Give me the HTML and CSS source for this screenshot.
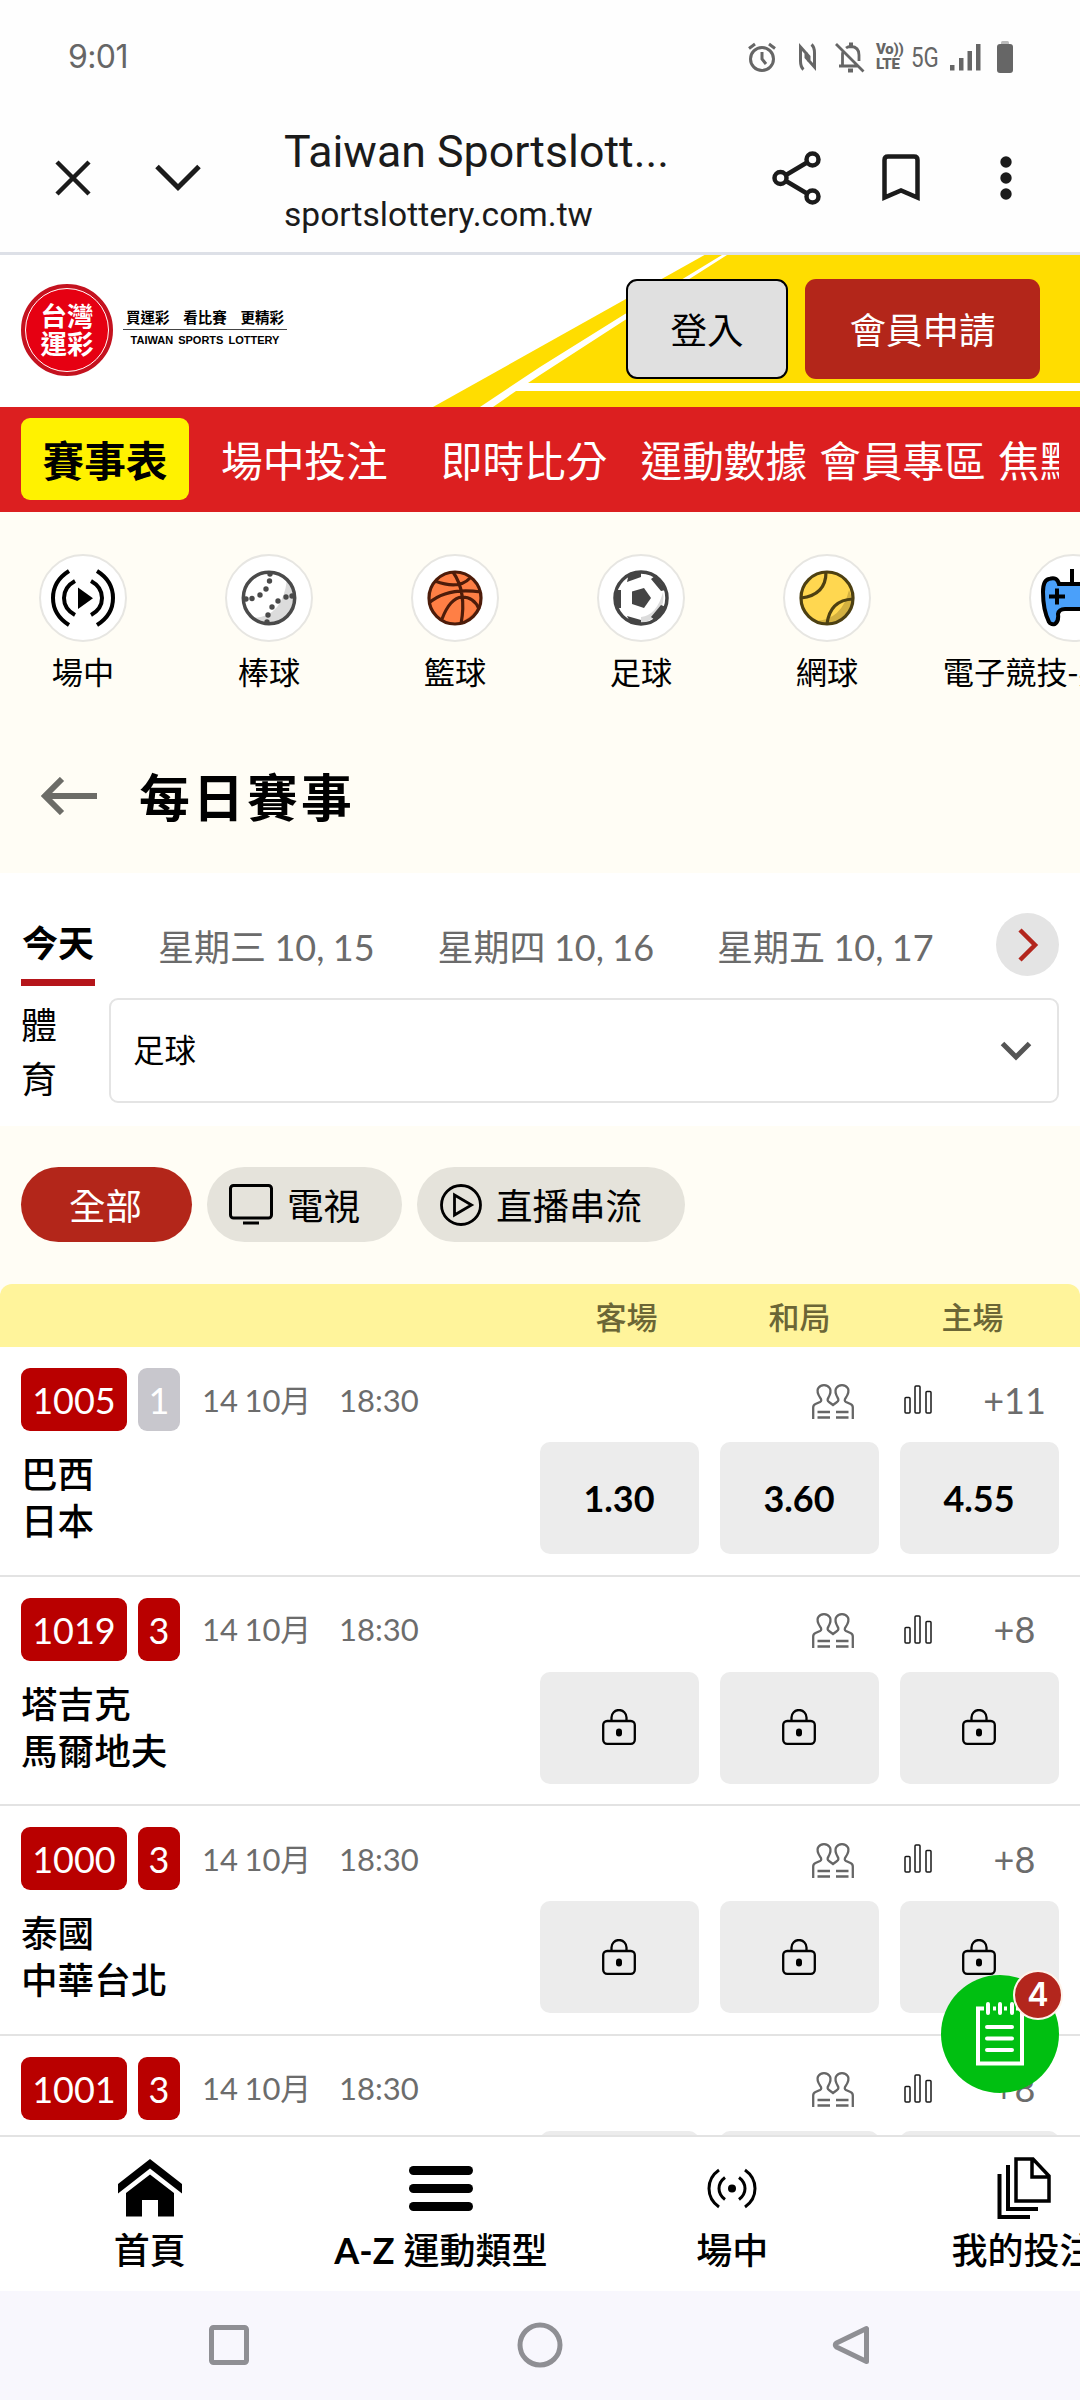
FILE: index.html
```html
<!DOCTYPE html>
<html lang="zh-Hant">
<head>
<meta charset="utf-8">
<title>Taiwan Sportslottery</title>
<link rel="stylesheet" href="styles.css">
</head>
<body>
<svg class="defs" width="0" height="0">
  <symbol id="people" viewBox="0 0 42 35"><g fill="none" stroke="#666" stroke-width="2.300"><path d="M1.200 35V23.500Q1.200 21 3.500 20L8 18Q10.500 16.500 8 13.500Q4.500 8 6 4.500Q8 1.200 12 1.200Q16 1.200 18 4.500Q19.500 8 16.500 13.500Q14.500 16.500 17 18L21 21L25 18Q27.500 16.500 25.500 13.500Q22.500 8 24 4.500Q26 1.200 30 1.200Q34 1.200 36 4.500Q37.500 8 34 13.500Q31.500 16.500 34 18L38.500 20Q40.800 21 40.800 23.500V35"/><path d="M5.500 28H18M24 28H36.500M5.500 33.500H18M24 33.500H36.500"/></g></symbol>
  <symbol id="bars" viewBox="0 0 28 29"><g fill="#fff" stroke="#1a1a1a" stroke-width="1.500"><rect x="1" y="12.500" width="5" height="15.500" rx="1"/><rect x="11" y="1" width="5" height="27" rx="1"/><rect x="22" y="6.500" width="5" height="21.500" rx="1"/></g></symbol>
  <symbol id="lock" viewBox="0 0 34 36"><g fill="none" stroke="#000" stroke-width="2.300"><rect x="1.200" y="12" width="31.600" height="22.800" rx="4"/><path d="M9.500 12V8.500A7.500 7.500 0 0 1 24.500 8.500V12"/></g><rect x="14" y="19.500" width="6" height="8" rx="3"/></symbol>
</svg>

<div class="status">
  <span class="clock">9:01</span>
  <div class="status-icons">
    <svg class="i-alarm" width="28" height="30" viewBox="0 0 28 30" fill="none" stroke="#666" stroke-width="3"><circle cx="14" cy="17" r="11.500"/><path d="M14 10v7l4 5M1 6.500L7 2M27 6.500L21 2"/></svg>
    <svg class="i-nfc" width="17" height="28" viewBox="0 0 17 28" fill="none" stroke="#666" stroke-width="3"><path d="M4.500 26.500Q1.500 24 1.500 18V4L10 13.500V19M12.500 1.500Q15.500 4 15.500 10V24L7 14.500V9"/></svg>
    <svg class="i-bell" width="30" height="31" viewBox="0 0 30 31" fill="none" stroke="#666" stroke-width="2.800"><path d="M1 2L28.500 29.500M4 24H23.500M7.500 24V12Q7.500 10 8.500 9M11 6Q13 4.500 16 4.500Q24 5 24 13V19"/><path d="M14 2.500h4M13 28.500h5" stroke-width="4"/></svg>
    <span class="volte"><b>Vo))</b><b>LTE</b></span>
    <span class="net">5G</span>
    <svg class="i-signal" width="31" height="28" viewBox="0 0 31 28" fill="#666"><path d="M0 22h4.500v5.500H0zM9 15h4.500v12.500H9zM17.500 8h4.500v19.500h-4.500zM26 1h4.500v26.500H26z"/></svg>
    <svg class="i-battery" width="16" height="32" viewBox="0 0 16 32"><path d="M4 3V1.500Q4 0 5.500 0h5Q12 0 12 1.500V3z" fill="#bbb"/><rect y="3" width="16" height="29" rx="3" fill="#666"/></svg>
  </div>
</div>

<div class="browser">
  <svg class="b-close" width="36" height="36" viewBox="0 0 36 36" stroke="#1b1b1b" stroke-width="4.500"><path d="M2 2L34 34M34 2L2 34"/></svg>
  <svg class="b-down" width="46" height="28" viewBox="0 0 46 28" fill="none" stroke="#1b1b1b" stroke-width="5"><path d="M2 2.500L23 23.500L44 2.500"/></svg>
  <div class="b-text"><div class="b-title">Taiwan Sportslott...</div><div class="b-url">sportslottery.com.tw</div></div>
  <svg class="b-share" width="50" height="54" viewBox="0 0 50 54" fill="none" stroke="#1b1b1b" stroke-width="4.500"><path d="M14 24L35 11.500M14 30L35 42.500"/><circle cx="8.500" cy="27" r="6"/><circle cx="40.500" cy="8.500" r="6"/><circle cx="40.500" cy="45.500" r="6"/></svg>
  <svg class="b-mark" width="38" height="48" viewBox="0 0 38 48" fill="none" stroke="#1b1b1b" stroke-width="4.500"><path d="M2.500 43.500V6Q2.500 2.500 6 2.500H32Q35.500 2.500 35.500 6V43.500L19 36.500Z"/></svg>
  <svg class="b-more" width="12" height="44" viewBox="0 0 12 44" fill="#1b1b1b"><circle cx="6" cy="6" r="5.700"/><circle cx="6" cy="22" r="5.700"/><circle cx="6" cy="38" r="5.700"/></svg>
</div>

<header class="site">
  <svg class="site-bg" width="1080" height="152" viewBox="0 0 1080 152"><path d="M433 152L704.500 0H1080V152Z" fill="#ffdd00"/><path d="M480 152L540 112L625 59L722 0H727L625 65L540 120L528 128H1080V136H516L493 152Z" fill="#fff"/></svg>
  <div class="site-row">
    <div class="logo"><span class="logo-ring"></span><span>台灣</span><span>運彩</span></div>
    <div class="slogan"><div class="slogan-zh"><span>買運彩</span><span>看比賽</span><span>更精彩</span></div><div class="slogan-en">TAIWAN SPORTS LOTTERY</div></div>
    <button class="btn login">登入</button>
    <button class="btn join">會員申請</button>
  </div>
</header>

<nav class="menu"><div class="menu-clip">
  <a class="active">賽事表</a><a class="m2">場中投注</a><a class="m3">即時比分</a><a class="m4">運動數據</a><a class="m5">會員專區</a><a class="m6">焦點</a>
</div></nav>

<div class="sports">
  <div class="sport"><div class="disc"><svg width="64" height="58" viewBox="0 0 64 58" fill="none" stroke="#000" stroke-width="4"><path d="M18 2Q2 12 2 29Q2 46 18 56M46 2Q62 12 62 29Q62 46 46 56M24 12Q13 18 13 29Q13 40 24 46M40 12Q51 18 51 29Q51 40 40 46"/><path d="M27 18.500V40L42 29.200Z" fill="#000" stroke="none"/></svg></div>場中</div>
  <div class="sport"><div class="disc"><svg width="56" height="56" viewBox="0 0 56 56"><circle cx="28" cy="28" r="26" fill="#fff"/><path d="M46 9A26 26 0 0 1 12 48Q42 47 46 9Z" fill="#dcdcdc"/><circle cx="28" cy="28" r="25.700" fill="none" stroke="#4a4a4a" stroke-width="3.500"/><g fill="#4a4a4a"><circle cx="5" cy="29" r="2.700"/><circle cx="11" cy="28.500" r="2.700"/><circle cx="19" cy="25" r="2.700"/><circle cx="25" cy="19" r="2.700"/><circle cx="28.500" cy="11" r="2.700"/><circle cx="29" cy="4" r="2.700"/><circle cx="51" cy="26" r="2.700"/><circle cx="45" cy="27" r="2.700"/><circle cx="37" cy="31" r="2.700"/><circle cx="31" cy="37" r="2.700"/><circle cx="27" cy="45" r="2.700"/><circle cx="26" cy="52" r="2.700"/></g></svg></div>棒球</div>
  <div class="sport"><div class="disc"><svg width="56" height="56" viewBox="0 0 56 56"><circle cx="28" cy="28" r="26" fill="#ff7f45"/><path d="M53 33A26 26 0 0 1 28 53Q45 50 53 33Z" fill="#dd6836"/><g fill="none" stroke="#4d1c0a" stroke-width="3.200"><circle cx="28" cy="28" r="26"/><path d="M26 2Q40 22 34 54M2 33Q20 17 54 22M8 11Q32 20 43 8M15 49Q23 28 35 27Q47 27 52 39"/></g></svg></div>籃球</div>
  <div class="sport"><div class="disc"><svg width="56" height="56" viewBox="0 0 56 56"><circle cx="28" cy="28" r="26" fill="#fff"/><path d="M50 22A26 26 0 0 1 28 53V47Q44 45 50 22Z" fill="#dcdcdc"/><circle cx="28" cy="28" r="26" fill="none" stroke="#444" stroke-width="3.500"/><path d="M19 21.500L31 18L38 28L31 38L19 34Z" fill="#444"/><path d="M14 12L28 7V2L16 3ZM2 20H8V38H2ZM14 46L28 50V54H18ZM38 9L48 21L53 20L42 6ZM38 47L48 35L53 37L43 51Z" fill="#444"/></svg></div>足球</div>
  <div class="sport"><div class="disc"><svg width="56" height="56" viewBox="0 0 56 56"><circle cx="28" cy="28" r="26" fill="#ffd750"/><path d="M50 20L53 28A26 26 0 0 1 16 51Q43 50 50 20Z" fill="#d3b040"/><g fill="none" stroke="#4d4012" stroke-width="3.200"><circle cx="28" cy="28" r="26"/><path d="M27 2Q27 25 2 28M54 29Q31 30 28 54"/></g></svg></div>網球</div>
  <div class="sport wide"><div class="disc"><svg width="64" height="58" viewBox="0 0 64 58"><g stroke="#000" stroke-width="4"><path d="M31 0V14" fill="none"/><path d="M18 15Q16 7 8 10Q2 11 2 23Q2 41 8 53Q10 56 14 55Q18 52 17 45Q18 40 24 40H40Q46 40 47 45Q46 52 50 55Q54 56 56 53Q62 41 62 23Q62 11 56 10Q48 7 46 15Z" fill="#4aa0fa"/><path d="M8 27.500H24M16 19.500V35.500" fill="none"/></g></svg></div>電子競技-英雄聯盟</div>
</div>

<div class="heading"><svg width="56" height="38" viewBox="0 0 56 38" fill="none" stroke="#6c6c67" stroke-width="6"><path d="M56 19H4M21 2L4 19L21 36"/></svg><h1>每日賽事</h1></div>

<section class="filter">
  <div class="days">
    <span class="day today">今天</span><span class="day">星期三 10, 15</span><span class="day">星期四 10, 16</span><span class="day">星期五 10, 17</span>
    <span class="next"><svg width="22" height="34" viewBox="0 0 22 34" fill="none" stroke="#b3261d" stroke-width="4.500"><path d="M3 2L18 17L3 32"/></svg></span>
  </div>
  <div class="pick"><label>體育</label><div class="select">足球<svg width="32" height="20" viewBox="0 0 32 20" fill="none" stroke="#555" stroke-width="5"><path d="M2.500 2.500L16 16L29.500 2.500"/></svg></div></div>
</section>

<div class="pills">
  <span class="pill on">全部</span>
  <span class="pill tv"><svg width="44" height="41" viewBox="0 0 44 41" fill="none" stroke="#000" stroke-width="3"><rect x="1.500" y="1.500" width="41" height="32.500" rx="3"/><path d="M14 39H30"/></svg>電視</span>
  <span class="pill live"><svg width="42" height="42" viewBox="0 0 42 42" fill="none" stroke="#000" stroke-width="2.800"><circle cx="21" cy="21" r="19.500"/><path d="M14.500 11V31L31.500 21Z"/></svg>直播串流</span>
</div>

<div class="cols"><span>客場</span><span>和局</span><span>主場</span></div>

<main class="matches">
  <article class="match">
    <div class="meta"><span class="no">1005</span><span class="min grey">1</span><span class="date">14 10月</span><span class="time">18:30</span><svg class="people"><use href="#people"/></svg><svg class="bars"><use href="#bars"/></svg><span class="more">+11</span></div>
    <div class="line"><div class="teams"><div>巴西</div><div>日本</div></div><span class="odd">1.30</span><span class="odd">3.60</span><span class="odd">4.55</span></div>
  </article>
  <article class="match">
    <div class="meta"><span class="no">1019</span><span class="min">3</span><span class="date">14 10月</span><span class="time">18:30</span><svg class="people"><use href="#people"/></svg><svg class="bars"><use href="#bars"/></svg><span class="more">+8</span></div>
    <div class="line"><div class="teams"><div>塔吉克</div><div>馬爾地夫</div></div><span class="odd"><svg><use href="#lock"/></svg></span><span class="odd"><svg><use href="#lock"/></svg></span><span class="odd"><svg><use href="#lock"/></svg></span></div>
  </article>
  <article class="match">
    <div class="meta"><span class="no">1000</span><span class="min">3</span><span class="date">14 10月</span><span class="time">18:30</span><svg class="people"><use href="#people"/></svg><svg class="bars"><use href="#bars"/></svg><span class="more">+8</span></div>
    <div class="line"><div class="teams"><div>泰國</div><div>中華台北</div></div><span class="odd"><svg><use href="#lock"/></svg></span><span class="odd"><svg><use href="#lock"/></svg></span><span class="odd"><svg><use href="#lock"/></svg></span></div>
  </article>
  <article class="match">
    <div class="meta"><span class="no">1001</span><span class="min">3</span><span class="date">14 10月</span><span class="time">18:30</span><svg class="people"><use href="#people"/></svg><svg class="bars"><use href="#bars"/></svg><span class="more">+8</span></div>
    <div class="line"><div class="teams"></div><span class="odd"></span><span class="odd"></span><span class="odd"></span></div>
  </article>
</main>

<div class="fab"><svg width="48" height="64" viewBox="0 0 48 64" fill="none" stroke="#fff" stroke-width="4"><path d="M8 6.500H2V61.500H46V6.500H40M17 6.500H20M28 6.500H31"/><path d="M12 2V11M24 2V11M36 2V11M11 25H36M11 36.500H36M11 48H36" stroke-linecap="round"/></svg><span class="count">4</span></div>

<nav class="tabs">
  <div class="tab"><svg width="64" height="58" viewBox="0 0 64 58"><path d="M32 0L64 25V34.500L32 9.500L0 34.500V25Z"/><path d="M32 15.500L56 34V57.500H40V41H24V57.500H8V34Z"/></svg>首頁</div>
  <div class="tab"><svg width="64" height="58" viewBox="0 0 64 58"><rect y="7" width="64" height="9" rx="4.500"/><rect y="25" width="64" height="9" rx="4.500"/><rect y="43" width="64" height="9" rx="4.500"/></svg><span><b>A-Z</b> 運動類型</span></div>
  <div class="tab"><svg width="64" height="58" viewBox="0 0 64 58" fill="none" stroke="#000" stroke-width="3"><path d="M19 11Q9 18 9 29.500Q9 41 19 48M45 11Q55 18 55 29.500Q55 41 45 48M25 18.500Q19 23 19 29.500Q19 36 25 40.500M39 18.500Q45 23 45 29.500Q45 36 39 40.500"/><circle cx="32" cy="29.500" r="4" fill="#000" stroke="none"/></svg>場中</div>
  <div class="tab"><svg width="54" height="62" viewBox="0 0 54 62" fill="none" stroke="#000" stroke-width="3.500"><path d="M19 2H36L52 19V44H19ZM35 2V20H52"/><path d="M11 8V52H41M2.500 17V60H33" stroke-width="4"/></svg>我的投注</div>
</nav>

<div class="system">
  <svg width="42" height="42" viewBox="0 0 42 42"><rect x="3.500" y="3.500" width="35" height="35" rx="2" fill="none" stroke="#8f8f94" stroke-width="5"/></svg>
  <svg width="46" height="46" viewBox="0 0 46 46"><circle cx="23" cy="23" r="20" fill="none" stroke="#8f8f94" stroke-width="5"/></svg>
  <svg width="42" height="42" viewBox="0 0 42 42"><path d="M36.500 4.500V37.500L6.500 23Q4 21 6.500 19Z" fill="none" stroke="#8f8f94" stroke-width="5" stroke-linejoin="round"/></svg>
</div>
</body>
</html>
```
FILE: styles.css
```css
* { box-sizing: border-box; }
html, body { margin: 0; }
body {
  width: 1080px; height: 2400px; overflow: hidden; position: relative;
  display: flex; flex-direction: column; background: #fffdf5; color: #000;
  font: 400 36px/1 Lato, "Noto Sans CJK TC", sans-serif;
}
body > * { flex: none; }
svg { display: block; flex: none; }
.defs { position: absolute; }

.status { height: 114px; background: #fefefe; display: flex; justify-content: space-between; padding: 0 67px 0 68px; color: #666; }
.clock { font: 400 32px/114px Inter, sans-serif; letter-spacing: -.6px; }
.status-icons { display: flex; align-items: center; height: 114px; }
.i-nfc { margin-left: 23px; }
.i-bell { margin-left: 19px; }
.volte { width: 26px; margin-left: 11px; display: flex; flex-direction: column; font: 700 15px/15px Roboto, sans-serif; letter-spacing: -.3px; }
.net { width: 28px; margin: 1px 11px 0 9px; font: 400 28px/1 Roboto, sans-serif; transform: scaleX(.8); transform-origin: left; }
.i-battery { margin-left: 16px; }

.browser { height: 141px; background: #fefefe; border-bottom: 3px solid #dde0e7; display: flex; align-items: center; padding: 0 67px 10px 55px; color: #1b1b1b; }
.b-down { margin-left: 64px; }
.b-text { width: 400px; margin-left: 83px; padding-top: 12px; font-family: Roboto, sans-serif; }
.b-title { font-size: 44.700px; line-height: 62px; white-space: nowrap; }
.b-url { font-size: 33.600px; line-height: 64px; }
.b-share { margin-left: 88px; }
.b-mark { margin-left: 60px; }
.b-more { margin-left: 80px; }

.site { height: 152px; background: #fff; position: relative; }
.site-bg { position: absolute; inset: 0; }
.site-row { position: relative; display: flex; padding: 24px 40px 0 21px; }
.logo { width: 92px; height: 92px; margin-top: 5px; border-radius: 50%; background: #e60012; border: 4px solid #c4121f; color: #fff; position: relative; display: flex; flex-direction: column; align-items: center; padding-top: 13px; font: 700 26.500px/28px "Noto Sans CJK TC", sans-serif; }
.logo-ring { position: absolute; inset: 0; border: 1.500px solid #fff; border-radius: 50%; }
.slogan { width: 164px; margin: 26px auto 0 10px; }
.slogan-zh { display: flex; justify-content: space-between; padding: 0 3px; border-bottom: 1px solid #444; font: 700 14.500px/24px "Noto Sans CJK TC", sans-serif; }
.slogan-en { font: 700 11px/21px "Liberation Sans", sans-serif; text-align: center; word-spacing: 2px; white-space: nowrap; }
.btn { height: 100px; border-radius: 11px; font: 400 36.500px/1 "Noto Sans CJK TC", sans-serif; padding: 0; white-space: nowrap; }
.login { width: 162px; background: #e0e0e0; border: 2px solid #000; color: #000; }
.join { width: 235px; margin-left: 17px; background: #b3261a; border: 0; color: #fff; }

.menu { height: 105px; background: #dc1f20; padding: 0 21px; }
.menu-clip { width: 1038px; height: 105px; overflow: hidden; display: flex; align-items: center; color: #fff; font: 400 41.700px/1 "Noto Sans CJK TC", sans-serif; white-space: nowrap; }
.menu a { flex: none; }
.menu .active { width: 168px; height: 82px; margin-top: -1px; border-radius: 9px; background: #fff200; color: #000; font-weight: 700; text-align: center; line-height: 82px; }
.m2 { margin-left: 32px; }
.m3 { margin-left: 53px; }
.m4 { margin-left: 33px; }
.m5, .m6 { margin-left: 12px; }

.sports { height: 231px; display: flex; overflow: hidden; font: 400 31.200px/1 "Noto Sans CJK TC", sans-serif; padding: 42px 0 0 39px; gap: 98px; }
.sport { flex: none; width: 88px; display: flex; flex-direction: column; align-items: center; white-space: nowrap; gap: 13px; }
.wide { width: 262px; margin-left: -27px; }
.disc { width: 88px; height: 88px; border-radius: 50%; border: 2px solid #e7e6e2; background: #fff; display: flex; align-items: center; justify-content: center; }

.heading { height: 130px; display: flex; align-items: center; padding: 0 0 24px 41px; }
.heading h1 { margin: -2px 0 0 42px; font: 700 50.800px/1 "Noto Sans CJK TC", sans-serif; letter-spacing: 3.200px; }

.filter { height: 253px; background: #fff; padding: 40px 21px 0; }
.days { display: flex; height: 85px; color: #6b6b6b; }
.day { margin-left: 63px; line-height: 68px; white-space: nowrap; word-spacing: -.8px; }
.today { margin-left: 0; width: 74px; height: 73px; border-bottom: 7px solid #b5151a; color: #000; font-weight: 700; line-height: 61px; text-align: center; }
.next { margin-left: auto; width: 63px; height: 63px; border-radius: 50%; background: #e4e4e4; display: flex; align-items: center; justify-content: center; }
.pick { display: flex; }
.pick label { width: 88px; padding-right: 50px; line-height: 54px; }
.select { flex: 1; height: 105px; border: 2px solid #e4e4e4; border-radius: 9px; display: flex; align-items: center; justify-content: space-between; padding: 0 25px 0 22px; font-size: 31.500px; }

.pills { height: 158px; padding-top: 41px; display: flex; gap: 15px; font-family: "Noto Sans CJK TC", sans-serif; font-size: 36.500px; }
.pill { height: 75px; border-radius: 38px; background: #e5e3db; display: flex; align-items: center; line-height: 78px; white-space: nowrap; }
.on { margin-left: 21px; width: 171px; padding-right: 2px; background: #b3261a; color: #fff; justify-content: center; }
.tv { width: 195px; padding-left: 22px; gap: 14px; }
.live { width: 268px; padding-left: 23px; gap: 14px; }

.cols { height: 63px; background: #fff49b; border-radius: 12px 12px 0 0; display: flex; justify-content: flex-end; padding-right: 21px; font: 500 31px/63px "Noto Sans CJK TC", sans-serif; color: #6b6636; }
.cols span { width: 173px; text-align: center; }

.matches { height: 788px; overflow: hidden; background: #fff; }
.match { height: 229.500px; border-bottom: 2px solid #e3e3e3; padding: 21px 21px 0; }
.meta { height: 63px; display: flex; align-items: center; color: #6c6c6c; }
.no, .min { height: 63px; border-radius: 9px; background: #b90000; color: #fff; text-align: center; line-height: 64px; }
.no { width: 106px; }
.min { width: 42px; margin-left: 11px; }
.grey { background: #c8c7cd; }
.date { width: 137px; margin-left: 22px; padding-top: 1px; font-size: 31px; white-space: nowrap; word-spacing: -1.500px; }
.time { padding-top: 1px; font-size: 31px; }
.people { width: 42px; height: 35px; margin: 3px 0 0 auto; }
.bars { width: 28px; height: 29px; margin-left: 50px; }
.more { width: 89px; margin-left: 38px; text-align: center; line-height: 66px; }
.line { margin-top: 11px; display: flex; gap: 21px; }
.teams { flex: 1; padding-top: 9px; font-size: 36.600px; font-weight: 500; line-height: 47px; }
.odd { width: 159px; height: 112px; padding: 0 1px 1px 0; border-radius: 10px; background: #ececec; display: flex; align-items: center; justify-content: center; font-weight: 700; }
.odd svg { width: 34px; height: 36px; }

.fab { position: absolute; left: 941px; top: 1975px; width: 118px; height: 118px; border-radius: 50%; background: #00bf11; display: flex; align-items: center; justify-content: center; }
.count { position: absolute; left: 72px; top: -5px; width: 50px; height: 50px; border-radius: 50%; border: 2px solid #fff3ea; background: #b3261d; color: #fff; font: 600 32px/46px Inter, sans-serif; text-align: center; }

.tabs { height: 156px; background: #fff; border-top: 2px solid #e3e3e3; display: flex; padding-left: 4px; overflow: hidden; }
.tab { flex: none; width: 291.300px; padding-top: 20px; display: flex; flex-direction: column; align-items: center; gap: 13px; font-weight: 500; white-space: nowrap; }
.tab svg { height: 62px; }

.system { height: 109px; background: #f8f7fd; display: flex; justify-content: center; align-items: center; gap: 267px; padding: 0 1px 2px 0; }
```
